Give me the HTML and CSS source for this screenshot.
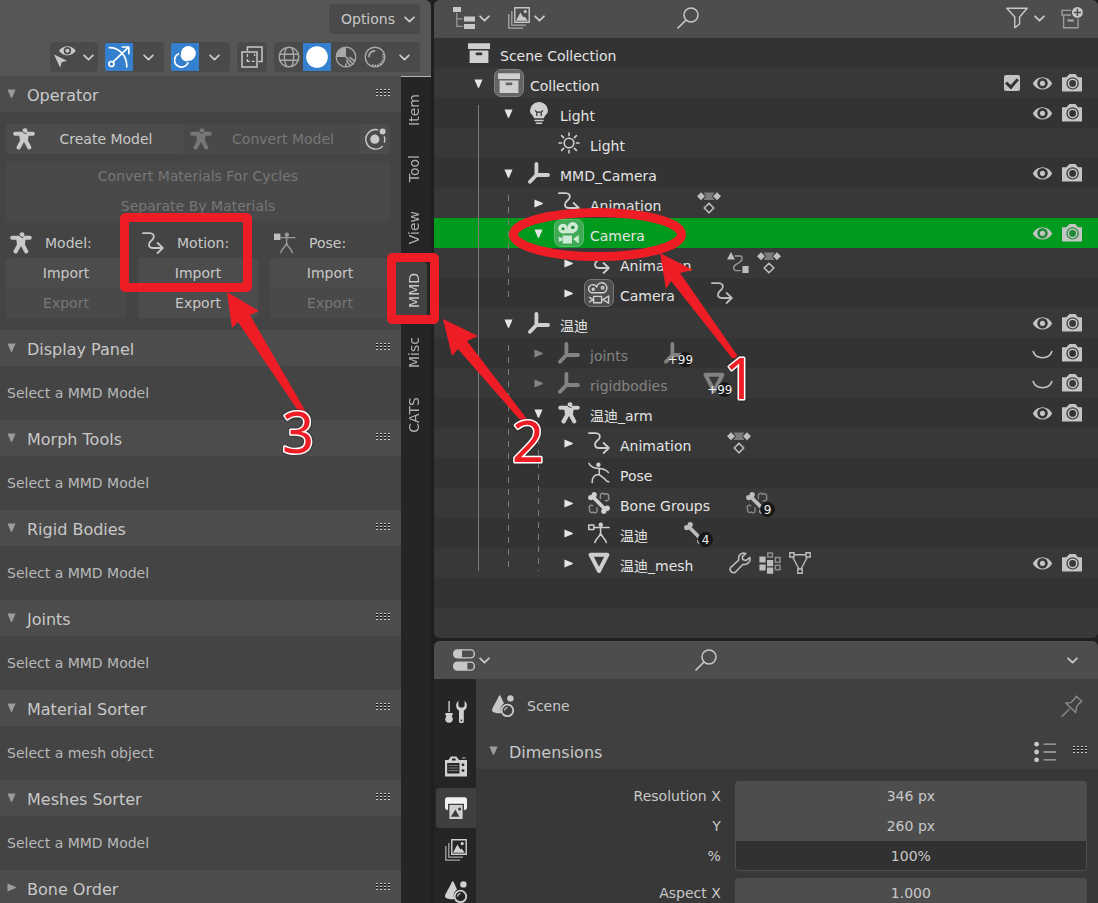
FILE: index.html
```html
<!DOCTYPE html>
<html lang="en">
<head>
<meta charset="utf-8">
<title>Scene editor</title>
<link rel="stylesheet" href="styles.css">
</head>
<body>
<svg class="defs" aria-hidden="true">
  <symbol id="chev" viewBox="0 0 10 10"><path d="M1 3l4 4 4-4" class="s" stroke-width="1.6"/></symbol>
  <symbol id="down" viewBox="0 0 10 10"><path d="M.5 .5h9L5.6 9.6H4.4z"/></symbol>
  <symbol id="right" viewBox="0 0 10 10"><path d="M.5 .5v9L9.8 5.5v-1z"/></symbol>
  <symbol id="grip" viewBox="0 0 15 8"><path d="M0 0h2v1H0zM4 0h2v1H4zM8 0h2v1H8zM12 0h2v1h-2zM0 3h2v1H0zM4 3h2v1H4zM8 3h2v1H8zM12 3h2v1h-2zM0 6h2v1H0zM4 6h2v1H4zM8 6h2v1H8zM12 6h2v1h-2z"/><path fill="#0c0c0c" d="M0 1h2v1H0zM4 1h2v1H4zM8 1h2v1H8zM12 1h2v1h-2zM0 4h2v1H0zM4 4h2v1H4zM8 4h2v1H8zM12 4h2v1h-2z"/></symbol>
  <symbol id="man" viewBox="0 0 22 22"><path class="s" stroke-width="4" d="M2.2 5.8H19.8"/><path d="M6 5h10L14.8 13H7z"/><path class="s" stroke-width="4.2" d="M9.4 12.5L5.6 19.4M12.6 12.5l3.6 6.9"/><circle cx="12" cy="2.6" r="2.4"/><path d="M9.4 3.4Q10.6 5.6 13.4 5.4" fill="none" stroke="#444" stroke-width="1"/></symbol>
  <symbol id="anim" viewBox="0 0 22 22"><path class="s" stroke-width="1.8" d="M1 1.2H7.4C11 1.2 12.6 3 11.4 6.2C10.6 8.4 7 9.2 7 12.4C7 14.8 9 16 11.6 16H20.6M15.6 11l5.2 5-5.2 5"/></symbol>
  <symbol id="posefig" viewBox="0 0 22 22"><circle cx="12.8" cy="2.8" r="2.2"/><path class="s" stroke-width="1.4" d="M7 5.6H21M12.6 5.6V11M12.6 11C11.6 15.4 8.4 15.4 6.8 20.6M12.6 11C13.6 15.4 16.8 15.4 18.4 20.6"/><path fill="#c0c0c0" d="M0 1.6h6.4V8H0z"/></symbol>
  <symbol id="armdata" viewBox="0 0 22 22"><circle cx="12.8" cy="2.8" r="2.2"/><path class="s" stroke-width="1.5" d="M6.2 5.6H21M12.6 5.6V11M12.6 11C11.6 15.4 8.4 15.4 6.8 20.6M12.6 11C13.6 15.4 16.8 15.4 18.4 20.6M.8 3h5v4.6h-5z"/></symbol>
  <symbol id="pose" viewBox="0 0 22 22"><circle cx="10.4" cy="2.8" r="2.2"/><path class="s" stroke-width="1.5" d="M1 1.4C3 5.4 7 6.4 10.6 6.4C15 6.4 17.6 7 20.4 10.4M11.2 6.6V12.6L17 17.2C18.2 19.4 19 19.8 21 19.8M11.2 12.6C6 12.6 4 15.4 4.2 20.6"/></symbol>
  <symbol id="orbit" viewBox="0 0 22 22"><circle cx="10.8" cy="11.2" r="4.6"/><circle cx="18.6" cy="3.4" r="3"/><path class="s" stroke-width="1.4" d="M13.6 1.7A9.8 9.8 0 1 0 18.4 18.4M20.4 9A9.8 9.8 0 0 1 20.4 14"/></symbol>
  <symbol id="eyecursor" viewBox="0 0 22 22"><path d="M5 4.8C9-1.2 17.8-1.2 21.8 4.8C17.8 11 9 11 5 4.8z"/><circle cx="13.4" cy="4.8" r="3.7" class="k"/><circle cx="13.4" cy="4.8" r="2"/><path d="M0 8.6L13 14.8 7.6 16.2 6.2 21.8z"/></symbol>
  <symbol id="gizmo" viewBox="0 0 22 22"><path class="s" stroke-width="1.7" d="M1.4 1.6C11.6 1.6 18.8 9.6 18.8 20.8M5.4 15.6L20.6 1.2M14.4 1H20.8V7.6"/><circle class="s" stroke-width="1.7" cx="3.4" cy="18" r="2.5"/></symbol>
  <symbol id="overlay" viewBox="0 0 22 22"><circle cx="14.4" cy="7.4" r="7.4"/><path class="s" stroke="#3480ce" stroke-width="1.6" d="M8 7A7 7 0 0 1 14.8 14"/><path class="s" stroke-width="1.7" d="M4.6 7.8A7 7 0 1 0 14 16.8"/><path class="s" stroke="#3480ce" stroke-width="1.5" d="M7.2 9.6A7.6 7.6 0 0 0 12.4 14.8"/></symbol>
  <symbol id="xray" viewBox="0 0 22 22"><path class="s sq" stroke-width="1.5" d="M6.4 5V1H21V15.6H17.4M1 6H16V21H1z"/><path class="s sq" stroke-width="1.3" d="M6.4 8v3M6.4 13v2.4H9M11 15.4h2.6M13.6 10V8"/></symbol>
  <symbol id="wire" viewBox="0 0 22 22"><g class="s" stroke-width="1.4"><circle cx="11" cy="11" r="9.8"/><path d="M1.4 8.2H20.6M1.4 14.2H20.6M8.6 1.4C5.6 7 5.6 15 8.6 20.6M13.6 1.4C16.4 7 16.4 15 13.6 20.6"/></g></symbol>
  <symbol id="solid" viewBox="0 0 22 22"><circle cx="11" cy="11" r="10.8"/></symbol>
  <symbol id="matprev" viewBox="0 0 22 22"><circle class="s" stroke-width="1.3" cx="11" cy="11" r="9.8"/><path d="M11 11V1.2A9.8 9.8 0 0 0 1.2 11z"/><path class="s" stroke-width="1.6" d="M11 11L18 18M11.6 14.8L15 19.6M11 18v2.6M15 11.6L19.6 15"/></symbol>
  <symbol id="rendered" viewBox="0 0 22 22"><circle class="s" stroke-width="1.4" cx="11" cy="11" r="9.8"/><path class="s" stroke-width="1.8" d="M5 10.4C5 7.4 7.4 5 10.4 5"/><path fill="none" stroke="currentColor" stroke-width="2.4" stroke-dasharray="1.4 1.2" d="M19 8A8.4 8.4 0 0 1 8 19"/></symbol>
  <symbol id="outliner" viewBox="0 0 22 22"><path d="M0 0h8v5H0zM11 9.4h11v5H11zM11 17h11v5H11z"/><path class="s" stroke-width="1.3" opacity=".6" d="M3.8 6.4V19.4H9.6M3.8 11.8H9.6"/></symbol>
  <symbol id="layers" viewBox="0 0 22 22"><path class="s sq" stroke-width="1.4" d="M6.8 .8H21.2V15.2H6.8z"/><path class="s sq" stroke-width="1.3" opacity=".75" d="M3.8 4V18.2H18M.8 7V21.2H15"/><path d="M8 13.8L12.4 5.4 15.4 10.4 16.6 9.4 19.8 13.8z"/><circle cx="17.2" cy="4.6" r="1.6"/></symbol>
  <symbol id="search" viewBox="0 0 22 22"><circle class="s" stroke-width="1.5" cx="14" cy="8" r="7"/><path class="s" stroke-width="1.7" d="M9 13L1 21"/></symbol>
  <symbol id="filter" viewBox="0 0 22 22"><path class="s" stroke-width="1.4" d="M.8 1.2H21.2L13.6 10V17L8.8 20.8V10z"/></symbol>
  <symbol id="newcol" viewBox="0 0 22 22"><path class="s sq" stroke-width="1.4" opacity=".65" d="M10 3.4H1V8H10M2.6 9V20.8H17V11.6"/><path d="M6.4 12.2h6.4v2.6H6.4z" opacity=".65"/><circle cx="16.4" cy="5.4" r="5.4"/><path stroke="#4d4d4d" stroke-width="1.5" d="M12.8 5.4h7.2M16.4 1.8v7.2"/></symbol>
  <symbol id="box" viewBox="0 0 22 22"><path d="M0 1.2h22V7H0zM1.6 8.4H20.4V21H1.6z"/><rect class="k" x="7.6" y="10.4" width="6.8" height="2.8" rx="1.2"/></symbol>
  <symbol id="bulb" viewBox="0 0 22 22"><path d="M11 0A8.8 8.8 0 0 1 20 8.6C20 12.6 16.6 13 16 16.2H6C5.4 13 2 12.6 2 8.6A8.8 8.8 0 0 1 11 0z"/><path stroke="#333" fill="none" stroke-width="1.2" d="M7 8.4L8.8 10.2H13.2L15 8.4M8.8 10.2V14M13.2 10.2V14"/><path class="s" stroke-width="1.5" d="M7 18.4H15M8.4 21.2H13.6"/></symbol>
  <symbol id="sun" viewBox="0 0 22 22"><circle class="s" stroke-width="1.6" cx="11" cy="11" r="4.8"/><path class="s" stroke-width="1.6" d="M11 1V3.6M11 18.4V21M1 11H3.6M18.4 11H21M3.6 3.6L5.6 5.6M16.4 16.4L18.4 18.4M18.4 3.6L16.4 5.6M3.6 18.4L5.6 16.4"/></symbol>
  <symbol id="empty" viewBox="0 0 22 22"><path class="s" stroke-width="3.8" d="M8.4 2V13H20M8.4 13L2 19.8"/></symbol>
  <symbol id="cam" viewBox="0 0 22 22"><circle cx="5" cy="6.6" r="4.8"/><circle cx="14.8" cy="5.2" r="5.2"/><path d="M4 7H16V11.2H4zM4.6 13.4H14V21.4H4.6zM15 17L20.8 13V21.6zM.8 14.6l3.4 1.6v2.4L.8 20z"/><circle class="k" cx="5" cy="6.8" r="1.5"/><circle class="k" cx="14.8" cy="5.4" r="1.7"/></symbol>
  <symbol id="camdata" viewBox="0 0 22 22"><g class="s" stroke-width="1.4"><path d="M3.4 10.8A4.2 4.2 0 1 1 8.6 5A5.2 5.2 0 1 1 15.6 10.8zM5.6 14.4H13.6V20.8H5.6zM15 17.6L20.6 14V21.2zM1.4 15.4L5 17.6 1.4 19.8"/><circle cx="5.2" cy="7.2" r="1"/><circle cx="14.6" cy="5.8" r="1.3"/></g></symbol>
  <symbol id="action" viewBox="0 0 24 22"><path d="M0 4.2L4 .2 8 4.2 4 8.2zM16 4.2L20 .2 24 4.2 20 8.2z"/><path opacity=".5" d="M6.6 .4H17.4L15 4.2 17.4 8H6.6L9 4.2z"/><path class="s" stroke-width="1.6" d="M12 11.2L16.8 16 12 20.8 7.2 16z"/></symbol>
  <symbol id="driver" viewBox="0 0 22 22"><path d="M4 0L8 7.6H0zM15.4 14h6.2v7h-6.2z"/><path class="s" stroke-width="1.4" opacity=".75" d="M8 4H13C16 4 15.6 8 13 10C9 13 6.4 13 6.6 16C6.8 19 9 18.6 13 18.6"/></symbol>
  <symbol id="tri" viewBox="0 0 22 22"><path fill="none" stroke="currentColor" stroke-linejoin="round" stroke-width="4" d="M2.6 2.8H19.4L11 19z"/></symbol>
  <symbol id="tridata" viewBox="0 0 22 22"><path class="s sq" stroke-width="1.4" d="M5 2.8H17M3.6 5L10 17M18.4 5L12 17M.8 .8H5V5H.8zM17 .8h4.2V5H17zM8.8 17H13.2V21.2H8.8z"/></symbol>
  <symbol id="bone" viewBox="0 0 22 22"><path class="s" stroke-width="3.8" d="M5 5L17 17"/><circle cx="2.8" cy="5.6" r="2.7"/><circle cx="6.2" cy="2.7" r="2.6"/><circle cx="19.2" cy="16.2" r="2.7"/><circle cx="15.8" cy="19.2" r="2.6"/></symbol>
  <symbol id="bonegrp" viewBox="0 0 22 22"><use href="#bone"/><path class="s" stroke-width="1.4" opacity=".6" d="M12.4 6.4V3.6C12.4 1.4 15 .4 16.4 2.4C18.8 .6 21.4 2.6 20.4 5.2C21.8 7.4 19.4 9.4 17.4 8.6M9 15.8V18.8C9 21 6.6 21.4 5.4 20C3.2 21.6 .8 19.8 1.8 17C0 14.8 2.4 12.6 4.6 13.6"/></symbol>
  <symbol id="wrench" viewBox="0 0 22 22"><path class="s" stroke-width="1.6" d="M16.8 1.6C12.6-.2 8.6 3.4 9.8 8L1.8 15.4C-.4 18 3.4 22.4 6.6 20L14 12.2C18.4 13.4 22 9.4 20.8 5.4L17 8.6 13.6 7.6 13.4 4.6z"/></symbol>
  <symbol id="vgroup" viewBox="0 0 22 22"><path d="M.4 4.4h6.2v6.2H.4zM.4 12.4h6.2v6.2H.4zM8 8h6.2v6.2H8zM8 15.6h6.2v6.2H8z"/><path class="s sq" stroke-width="1.5" opacity=".65" d="M8.8 1h4.6V5H8.8zM16.4 5.6H21v4.6h-4.6zM16.4 13.2H21v4.6h-4.6z"/></symbol>
  <symbol id="eye" viewBox="0 0 22 22"><path d="M.8 11C5.4 2.2 16.6 2.2 21.2 11C16.6 19.4 5.4 19.4 .8 11z"/><circle class="k" cx="11" cy="10.8" r="5.5"/><circle cx="11" cy="10.8" r="2.7"/></symbol>
  <symbol id="closed" viewBox="0 0 22 22"><path class="s" stroke-width="1.7" d="M1.2 9C4.2 17.6 17.8 17.6 20.8 9"/></symbol>
  <symbol id="photo" viewBox="0 0 22 22"><path d="M1 5.2H5.4L8.4 2H14.4L17 5.2H21V19.4H1z"/><circle class="k" cx="11.6" cy="11.4" r="6.2"/><circle class="s" stroke-width="1.6" cx="11.6" cy="11.4" r="4.2"/></symbol>
  <symbol id="props" viewBox="0 0 22 22"><rect class="s" x=".7" y=".9" width="20.6" height="8" rx="3.6" stroke-width="1.4"/><rect class="s" x=".7" y="13.1" width="20.6" height="8" rx="3.6" stroke-width="1.4"/><path d="M3.6 1H9V9H3.6C-.2 8 .2 1.4 3.6 1zM3.6 13.2H14.4V21H3.6C-.2 20 .2 14 3.6 13.2z"/></symbol>
  <symbol id="tools" viewBox="0 0 22 22"><path d="M3.4 0h1.4v11H3.4zM.4 12H7.6V14L6.6 15C9 18 7.8 21.8 4 21.8S-.8 18 1.4 15L.4 14z"/><path d="M13.4 0V5L15 6.4H18L19.6 5V0C22.8 2 22.8 7.4 18.8 9.6V20A2.4 2.4 0 0 1 14 20V9.6C10.4 7.6 10.2 2 13.4 0z"/><circle cx="16.4" cy="19.4" r=".9" fill="#252525"/></symbol>
  <symbol id="render" viewBox="0 0 22 22"><path d="M0 5H3.4L6 1.4H11.4L14 5H22V21.6H0z"/><path d="M17 2.2h3.6v1.4H17z" opacity=".7"/><path fill="#252525" d="M2.2 8H14.4V18.6H2.2zM7 3.6h3.6V5.4H7z"/><path stroke="currentColor" opacity=".5" d="M3.4 10.4H13.2M3.4 13H13.2M3.4 15.6H13.2"/><circle cx="18" cy="9.8" r="1.4" fill="#252525"/><circle cx="18" cy="15.6" r="1.4" fill="#252525"/></symbol>
  <symbol id="output" viewBox="0 0 22 22"><path fill="#f2f2f2" d="M2.4 .2H19.6Q22 .2 22 3V10.6Q22 13 19 13V6.8H3V13Q0 13 0 10.6V3Q0 .2 2.4 .2z"/><path d="M4.4 8H17.6V22H4.4z"/><path fill="#3c3c3c" d="M5.8 19.8L10.4 12.6 14.4 19.8z"/><circle cx="14.6" cy="12" r="1.5" fill="#3c3c3c"/></symbol>
  <symbol id="scene" viewBox="0 0 22 22"><path d="M7 .4H8.4L12 8.6C8.6 11 8 14.6 9.4 18C5 18.8 0 17.8 0 15.2C0 12.6 3.6 8.6 7 .4z"/><circle cx="18.4" cy="3.4" r="3.2"/><circle class="s" stroke-width="1.8" cx="15.4" cy="15.4" r="5.8"/><path class="s" stroke-width="1.3" d="M12.6 15A3 3 0 0 1 15 12.6"/></symbol>
  <symbol id="pin" viewBox="0 0 22 22"><path class="s" stroke-width="1.4" d="M15.4 1.2L20.8 6.4 18 8.6 15.6 11.6 14.6 17.6 4.8 8 10 7.6 13.6 3.8zM8 14.4L1 21.2"/></symbol>
  <symbol id="list" viewBox="0 0 22 22"><circle cx="2.6" cy="3.2" r="2.4"/><circle cx="2.6" cy="11" r="2.4"/><circle cx="2.6" cy="18.8" r="2.4"/><path class="s" stroke-width="1.3" opacity=".8" d="M10 3.2H21.4M10 11H21.4M10 18.8H21.4"/></symbol>
</svg>

<div class="app">
  <section class="viewport" aria-label="3D viewport">
    <header class="vp-head">
      <div class="vp-line"><button class="options">Options <svg class="c"><use href="#chev"/></svg></button></div>
      <div class="vp-line">
        <div class="group"><button class="tight" aria-label="Visibility"><svg class="i"><use href="#eyecursor"/></svg><svg class="c"><use href="#chev"/></svg></button></div>
        <div class="group"><button class="on" aria-label="Gizmos"><svg class="i"><use href="#gizmo"/></svg></button><button class="slot" aria-label="Gizmo options"><svg class="c"><use href="#chev"/></svg></button></div>
        <div class="group"><button class="on" aria-label="Overlays"><svg class="i"><use href="#overlay"/></svg></button><button class="slot" aria-label="Overlay options"><svg class="c"><use href="#chev"/></svg></button></div>
        <div class="group"><button class="slot" aria-label="X-ray"><svg class="i"><use href="#xray"/></svg></button></div>
        <div class="group soft"><button class="slot" aria-label="Wireframe"><svg class="i"><use href="#wire"/></svg></button><button class="on" aria-label="Solid"><svg class="i"><use href="#solid"/></svg></button><button class="slot" aria-label="Material preview"><svg class="i"><use href="#matprev"/></svg></button><button class="slot" aria-label="Rendered"><svg class="i"><use href="#rendered"/></svg></button><button class="slot bright" aria-label="Shading options"><svg class="c"><use href="#chev"/></svg></button></div>
      </div>
    </header>
    <div class="side">
      <div class="panels">
        <section>
          <h2><svg class="t"><use href="#down"/></svg>Operator<svg class="g"><use href="#grip"/></svg></h2>
          <div class="body operator">
            <div class="joined">
              <button class="wide"><svg class="i"><use href="#man"/></svg><span>Create Model</span></button>
              <button class="wide" disabled><svg class="i"><use href="#man"/></svg><span>Convert Model</span></button>
              <button class="slot" aria-label="Rigid body world"><svg class="i"><use href="#orbit"/></svg></button>
            </div>
            <div class="stack">
              <button disabled>Convert Materials For Cycles</button>
              <button disabled>Separate By Materials</button>
            </div>
            <div class="cols">
              <div><h3><svg class="i"><use href="#man"/></svg>Model:</h3><div class="stack"><button>Import</button><button disabled>Export</button></div></div>
              <div><h3><svg class="i"><use href="#anim"/></svg>Motion:</h3><div class="stack"><button>Import</button><button>Export</button></div></div>
              <div><h3><svg class="i dim"><use href="#posefig"/></svg>Pose:</h3><div class="stack"><button>Import</button><button disabled>Export</button></div></div>
            </div>
          </div>
        </section>
        <section><h2><svg class="t"><use href="#down"/></svg>Display Panel<svg class="g"><use href="#grip"/></svg></h2><div class="body"><p>Select a MMD Model</p></div></section>
        <section><h2><svg class="t"><use href="#down"/></svg>Morph Tools<svg class="g"><use href="#grip"/></svg></h2><div class="body"><p>Select a MMD Model</p></div></section>
        <section><h2><svg class="t"><use href="#down"/></svg>Rigid Bodies<svg class="g"><use href="#grip"/></svg></h2><div class="body"><p>Select a MMD Model</p></div></section>
        <section><h2><svg class="t"><use href="#down"/></svg>Joints<svg class="g"><use href="#grip"/></svg></h2><div class="body"><p>Select a MMD Model</p></div></section>
        <section><h2><svg class="t"><use href="#down"/></svg>Material Sorter<svg class="g"><use href="#grip"/></svg></h2><div class="body"><p>Select a mesh object</p></div></section>
        <section><h2><svg class="t"><use href="#down"/></svg>Meshes Sorter<svg class="g"><use href="#grip"/></svg></h2><div class="body"><p>Select a MMD Model</p></div></section>
        <section><h2><svg class="t"><use href="#right"/></svg>Bone Order<svg class="g"><use href="#grip"/></svg></h2></section>
      </div>
      <nav class="vtabs" aria-label="Sidebar tabs">
        <button>Item</button><button>Tool</button><button>View</button><button class="active">MMD</button><button>Misc</button><button>CATS</button>
      </nav>
    </div>
  </section>

  <div class="right">
    <section class="outliner" aria-label="Outliner">
      <header class="bar">
        <div class="left">
          <button aria-label="Editor type"><svg class="i"><use href="#outliner"/></svg><svg class="c"><use href="#chev"/></svg></button>
          <button aria-label="Display mode"><svg class="i"><use href="#layers"/></svg><svg class="c"><use href="#chev"/></svg></button>
        </div>
        <label class="find"><svg class="i"><use href="#search"/></svg><input type="text" aria-label="Search outliner"></label>
        <div class="tail">
          <button aria-label="Filter"><svg class="i"><use href="#filter"/></svg><svg class="c"><use href="#chev"/></svg></button>
          <button aria-label="New collection"><svg class="i"><use href="#newcol"/></svg></button>
        </div>
      </header>
      <ul class="tree">
        <li class="l0"><span class="ico"><svg class="i"><use href="#box"/></svg></span><span class="name">Scene Collection</span></li>
        <li class="l0"><span class="arr"><svg class="t"><use href="#down"/></svg></span><span class="ico tile strong"><svg class="i"><use href="#box"/></svg></span><span class="name">Collection</span>
          <span class="tog"><label class="check"><input type="checkbox" checked aria-label="Include collection"></label><button aria-label="Hide"><svg class="e"><use href="#eye"/></svg></button><button aria-label="Disable in render"><svg class="i"><use href="#photo"/></svg></button></span></li>
        <li class="l1"><span class="arr"><svg class="t"><use href="#down"/></svg></span><span class="ico"><svg class="i"><use href="#bulb"/></svg></span><span class="name">Light</span>
          <span class="tog"><button aria-label="Hide"><svg class="e"><use href="#eye"/></svg></button><button aria-label="Disable in render"><svg class="i"><use href="#photo"/></svg></button></span></li>
        <li class="l2"><span class="arr"></span><span class="ico"><svg class="i"><use href="#sun"/></svg></span><span class="name">Light</span></li>
        <li class="l1"><span class="arr"><svg class="t"><use href="#down"/></svg></span><span class="ico"><svg class="i"><use href="#empty"/></svg></span><span class="name">MMD_Camera</span>
          <span class="tog"><button aria-label="Hide"><svg class="e"><use href="#eye"/></svg></button><button aria-label="Disable in render"><svg class="i"><use href="#photo"/></svg></button></span></li>
        <li class="l2"><span class="arr"><svg class="t"><use href="#right"/></svg></span><span class="ico"><svg class="i"><use href="#anim"/></svg></span><span class="name">Animation</span><span class="ext"><svg class="w"><use href="#action"/></svg></span></li>
        <li class="l2 sel"><span class="arr"><svg class="t"><use href="#down"/></svg></span><span class="ico tile"><svg class="i"><use href="#cam"/></svg></span><span class="name">Camera</span>
          <span class="tog"><button aria-label="Hide"><svg class="e"><use href="#eye"/></svg></button><button aria-label="Disable in render"><svg class="i"><use href="#photo"/></svg></button></span></li>
        <li class="l3"><span class="arr"><svg class="t"><use href="#right"/></svg></span><span class="ico"><svg class="i"><use href="#anim"/></svg></span><span class="name">Animation</span><span class="ext"><svg class="i"><use href="#driver"/></svg><svg class="w"><use href="#action"/></svg></span></li>
        <li class="l3"><span class="arr"><svg class="t"><use href="#right"/></svg></span><span class="ico tile"><svg class="i"><use href="#camdata"/></svg></span><span class="name">Camera</span><span class="ext"><svg class="i"><use href="#anim"/></svg></span></li>
        <li class="l1"><span class="arr"><svg class="t"><use href="#down"/></svg></span><span class="ico"><svg class="i"><use href="#empty"/></svg></span><span class="name">温迪</span>
          <span class="tog"><button aria-label="Hide"><svg class="e"><use href="#eye"/></svg></button><button aria-label="Disable in render"><svg class="i"><use href="#photo"/></svg></button></span></li>
        <li class="l2 off"><span class="arr"><svg class="t"><use href="#right"/></svg></span><span class="ico"><svg class="i"><use href="#empty"/></svg></span><span class="name">joints</span><span class="ext"><svg class="i"><use href="#empty"/></svg><span class="badge">+99</span></span>
          <span class="tog"><button aria-label="Show"><svg class="e"><use href="#closed"/></svg></button><button aria-label="Disable in render"><svg class="i"><use href="#photo"/></svg></button></span></li>
        <li class="l2 off"><span class="arr"><svg class="t"><use href="#right"/></svg></span><span class="ico"><svg class="i"><use href="#empty"/></svg></span><span class="name">rigidbodies</span><span class="ext"><svg class="i"><use href="#tri"/></svg><span class="badge">+99</span></span>
          <span class="tog"><button aria-label="Show"><svg class="e"><use href="#closed"/></svg></button><button aria-label="Disable in render"><svg class="i"><use href="#photo"/></svg></button></span></li>
        <li class="l2"><span class="arr"><svg class="t"><use href="#down"/></svg></span><span class="ico"><svg class="i"><use href="#man"/></svg></span><span class="name">温迪_arm</span>
          <span class="tog"><button aria-label="Hide"><svg class="e"><use href="#eye"/></svg></button><button aria-label="Disable in render"><svg class="i"><use href="#photo"/></svg></button></span></li>
        <li class="l3"><span class="arr"><svg class="t"><use href="#right"/></svg></span><span class="ico"><svg class="i"><use href="#anim"/></svg></span><span class="name">Animation</span><span class="ext"><svg class="w"><use href="#action"/></svg></span></li>
        <li class="l3"><span class="arr"></span><span class="ico"><svg class="i"><use href="#pose"/></svg></span><span class="name">Pose</span></li>
        <li class="l3"><span class="arr"><svg class="t"><use href="#right"/></svg></span><span class="ico"><svg class="i"><use href="#bonegrp"/></svg></span><span class="name">Bone Groups</span><span class="ext"><svg class="i"><use href="#bonegrp"/></svg><span class="badge">9</span></span></li>
        <li class="l3"><span class="arr"><svg class="t"><use href="#right"/></svg></span><span class="ico"><svg class="i"><use href="#armdata"/></svg></span><span class="name">温迪</span><span class="ext"><svg class="i"><use href="#bone"/></svg><span class="badge">4</span></span></li>
        <li class="l3"><span class="arr"><svg class="t"><use href="#right"/></svg></span><span class="ico"><svg class="i"><use href="#tri"/></svg></span><span class="name">温迪_mesh</span><span class="ext"><svg class="i"><use href="#wrench"/></svg><svg class="i"><use href="#vgroup"/></svg><svg class="i"><use href="#tridata"/></svg></span>
          <span class="tog"><button aria-label="Hide"><svg class="e"><use href="#eye"/></svg></button><button aria-label="Disable in render"><svg class="i"><use href="#photo"/></svg></button></span></li>
        <li></li><li></li>
      </ul>
      <svg class="guides" aria-hidden="true"><path d="M44.5 105V571"/><path stroke-dasharray="6 6" d="M74.5 195V300M74.5 345V570M104.5 438V571"/></svg>
    </section>

    <section class="properties" aria-label="Properties">
      <header class="bar narrow">
        <div class="left"><button aria-label="Editor type"><svg class="i"><use href="#props"/></svg><svg class="c"><use href="#chev"/></svg></button></div>
        <label class="find"><svg class="i"><use href="#search"/></svg><input type="text" aria-label="Search properties"></label>
        <div class="tail"><button class="slot" aria-label="Options"><svg class="c"><use href="#chev"/></svg></button></div>
      </header>
      <div class="prop-main">
        <nav class="ptabs" aria-label="Property tabs">
          <button class="first" aria-label="Tool"><svg class="i"><use href="#tools"/></svg></button>
          <button aria-label="Render"><svg class="i"><use href="#render"/></svg></button>
          <button class="active" aria-label="Output"><svg class="i"><use href="#output"/></svg></button>
          <button aria-label="View layer"><svg class="i"><use href="#layers"/></svg></button>
          <button aria-label="Scene"><svg class="i"><use href="#scene"/></svg></button>
        </nav>
        <div class="prop-body">
          <div class="crumb"><svg class="i"><use href="#scene"/></svg><span>Scene</span><button aria-label="Pin"><svg class="i"><use href="#pin"/></svg></button></div>
          <h2><svg class="t"><use href="#down"/></svg>Dimensions<button aria-label="Presets"><svg class="i"><use href="#list"/></svg></button><svg class="g"><use href="#grip"/></svg></h2>
          <form class="fields">
            <div class="set">
              <label for="rx">Resolution X</label><input id="rx" type="text" value="346 px">
              <label for="ry">Y</label><input id="ry" type="text" value="260 px">
              <label for="rp">%</label><input id="rp" class="well" type="text" value="100%">
            </div>
            <div class="set"><label for="ax">Aspect X</label><input id="ax" type="text" value="1.000"></div>
          </form>
        </div>
      </div>
    </section>
  </div>

  <svg class="notes" aria-hidden="true">
    <g class="frame">
      <rect x="124.5" y="217.5" width="123" height="70" rx="1"/>
      <rect x="391.5" y="257.5" width="43" height="62" rx="1"/>
      <ellipse cx="597.5" cy="234.5" rx="84" ry="22"/>
    </g>
    <g class="pointer">
      <path d="M660 253L693 270 680 273 737 355Q737 359 732 358L671 281 666 289z"/>
      <path d="M443 319L478 336 467 341 527 419 521 421 458 349 452 356z"/>
      <path d="M227 292L259 311 250 315 306 412 299 412 238 322 232 328z"/>
    </g>
    <g class="num"><text x="724" y="399">1</text><text x="512" y="462">2</text><text x="282" y="453">3</text></g>
  </svg>
</div>
</body>
</html>
```
FILE: styles.css
```css
* { box-sizing: border-box; }
body, h2, h3, p, ul { margin: 0; padding: 0; font-weight: normal; }
body {
  background: #1f1f1f;
  color: #c8c8c8;
  font: 14px/20px "DejaVu Sans", "Noto Sans CJK SC", sans-serif;
  overflow: hidden;
}
button, input { font: inherit; color: inherit; background: none; border: 0; padding: 0; margin: 0; }
button { display: flex; align-items: center; justify-content: center; }
svg { flex: none; fill: currentColor; }
.defs { position: absolute; width: 0; height: 0; }
.s { fill: none; stroke: currentColor; stroke-linecap: round; stroke-linejoin: round; }
.sq { stroke-linecap: butt; stroke-linejoin: miter; }
.k { fill: var(--cut, #353535); }
.i { width: 22px; height: 22px; }
.w { width: 24px; height: 22px; }
.e { width: 21px; height: 21px; }
.c { width: 11px; height: 11px; }
.t { width: 9px; height: 9px; }
.g { width: 15px; height: 8px; }

.app { position: relative; display: grid; grid-template-columns: 431px 1fr; gap: 3px; height: 100vh; overflow: hidden; }

/* viewport */
.viewport { display: flex; flex-direction: column; min-height: 0; }
.vp-head { display: flex; flex-direction: column; gap: 8px; padding: 4px 11px 4px; background: #565656; border-radius: 0 6px 0 0; }
.vp-line { display: flex; justify-content: flex-end; gap: 7px; }
.options { height: 30px; padding: 0 5px 0 12px; gap: 9px; background: #4a4a4a; border-radius: 4px; }
.group { display: flex; align-items: center; height: 30px; background: #4a4a4a; border-radius: 4px; overflow: hidden; --cut: #4a4a4a; }
.group.soft { color: #a8a8a8; }
.group.soft .slot { width: 29px; }
.group .bright { color: #c8c8c8; }
.group.soft .bright { width: 31px; }
.slot { width: 30px; height: 30px; }
.on + .slot { width: 31px; }
.tight { width: 48px; gap: 7px; }
.on { width: 28px; height: 28px; background: #3480ce; color: #fff; }
.side { display: grid; grid-template-columns: 1fr 30px; flex: 1; min-height: 0; }
.panels { overflow: hidden; background: #444; }
h2 { display: flex; align-items: center; gap: 11px; height: 36px; padding: 3px 10px 0 7px; font-size: 16px; background: #4c4c4c; }
h2 .t { color: #9c9c9c; margin-bottom: 4px; }
h2 .g { margin-left: auto; margin-bottom: 5px; }
.body { padding: 12px 11px 12px 6px; color: #b8b8b8; }
.body p { padding: 5px 1px; }
.operator { display: flex; flex-direction: column; gap: 7px; color: #c8c8c8; }
.joined { display: flex; border-radius: 4px; overflow: hidden; }
.joined button { height: 30px; background: #4c4c4c; }
.joined .wide { flex: 1; padding-left: 7px; }
.joined .wide span { flex: 1; padding-right: 6px; }
button:disabled, .joined button:disabled { color: #777; background: #494949; }
.stack { display: grid; border-radius: 4px; overflow: hidden; }
.stack button { height: 30px; background: #4c4c4c; }
.stack button:disabled { background: #494949; }
.cols { display: grid; grid-template-columns: repeat(3, 1fr); gap: 12px; }
h3 { display: flex; align-items: center; gap: 13px; height: 30px; padding-left: 4px; font-size: 14px; }
.dim { color: #999; }
.vtabs { display: flex; flex-direction: column; gap: 7px; padding-top: 6px; background: #252525; border-top: 1px solid #b4b4b4; color: #b0b0b0; }
.vtabs button { writing-mode: vertical-rl; transform: rotate(180deg); width: 26px; padding: 11px 0; }
.vtabs .active { background: #424242; border-radius: 4px 0 0 4px; color: #c8c8c8; }

/* outliner */
.right { display: grid; grid-template-rows: 638px 1fr; gap: 3px; min-width: 0; }
.outliner { position: relative; background: #383838; border-radius: 6px; overflow: hidden; }
.bar { display: grid; grid-template-columns: 224px 1fr auto; align-items: center; height: 38px; padding: 0 11px 2px 19px; background: #4d4d4d; }
.bar.narrow { grid-template-columns: 242px 1fr auto; padding-bottom: 0; }
.bar button { gap: 4px; }
.left, .tail, .find { display: flex; align-items: center; }
.left { gap: 18px; }
.tail { gap: 16px; padding-right: 4px; }
.tail button { gap: 6px; }
.narrow .tail { padding-right: 0; }
.find input { flex: 1; min-width: 0; margin: 0 8px; outline: 0; }
.tree { list-style: none; color: #e4e4e4; }
.tree li { display: flex; align-items: center; height: 30px; padding-right: 11px; background: #383838; --cut: #383838; }
.tree li:nth-child(odd) { background: #333; --cut: #333; }
.tree .sel { background: #009a1e !important; --cut: #1f8a34 !important; }
.tree .off { color: #838383; }
.l0 { padding-left: 30px; }
.l1 { padding-left: 60px; }
.l2 { padding-left: 90px; }
.l3 { padding-left: 120px; }
.arr, .ico { display: flex; align-items: center; justify-content: center; width: 30px; height: 28px; }
.arr { padding-right: 2px; }
.ico { color: #cfcfcf; }
.off .ico { color: #838383; }
.tile { border: 1px solid #777; border-radius: 7px; background: #4d4d4d; }
.strong { background: #656565; border-color: #808080; --cut: #656565; }
.sel .tile { background: #3eab54; border-color: #5cba6e; color: #cfead4; }
.name { padding: 6px 0 0 6px; }
.ext { position: relative; display: flex; gap: 8px; margin-left: 36px; color: #bdbdbd; }
.off .ext { color: #838383; }
.badge { position: absolute; left: 14px; top: 10px; display: flex; justify-content: center; width: 15px; height: 15px; border-radius: 8px; background: #181818; color: #f0f0f0; font-size: 12px; line-height: 16px; }
.off .badge { justify-content: flex-end; }
.tog { display: flex; margin-left: auto; color: #c4c4c4; }
.tog > * { display: flex; align-items: center; justify-content: center; width: 30px; height: 30px; }
.check input { appearance: none; width: 16px; height: 16px; border-radius: 2px; background: #c4c4c4; display: grid; place-items: center; }
.check input::after { content: ""; width: 5px; height: 9px; margin-bottom: 3px; border: solid #333; border-width: 0 3px 3px 0; transform: rotate(42deg); }
.guides { position: absolute; inset: 0; width: 100%; height: 100%; fill: none; stroke: #7c7c7c; pointer-events: none; }

/* properties */
.properties { display: flex; flex-direction: column; min-height: 0; border-radius: 6px 6px 0 0; overflow: hidden; background: #383838; }
.prop-main { display: grid; grid-template-columns: 42px 1fr; flex: 1; min-height: 0; overflow: hidden; }
.ptabs { display: flex; flex-direction: column; gap: 2px; padding: 13px 0 0 2px; background: #252525; color: #d0d0d0; }
.ptabs button { flex: none; height: 40px; border-radius: 4px 0 0 4px; }
.ptabs .first { margin-bottom: 12px; }
.ptabs .active { background: #3f3f3f; }
.crumb { display: flex; align-items: center; gap: 13px; height: 54px; padding: 0 15px 0 16px; background: #404040; }
.crumb button { margin-left: auto; color: #8a8a8a; }
.prop-body h2 { background: #404040; padding-left: 13px; }
.prop-body h2 button { margin-left: auto; margin-bottom: 2px; }
.prop-body h2 .g { margin-left: 6px; }
.fields { display: grid; gap: 7px; padding: 12px 11px 0 0; }
.set { display: grid; grid-template-columns: 41fr 59fr; column-gap: 14px; }
.set label { text-align: right; line-height: 30px; }
.set input { min-width: 0; height: 30px; text-align: center; background: #4d4d4d; }
.set input:first-of-type { border-radius: 4px 4px 0 0; }
.set input:last-of-type { border-radius: 0 0 4px 4px; }
.set input:only-of-type { border-radius: 4px; }
.set .well { background: #313131; border: 1px solid #4d4d4d; border-top: 0; }

/* tutorial marks */
.notes { position: absolute; inset: 0; width: 100%; height: 100%; pointer-events: none; }
.frame { fill: none; stroke: #ee1c25; stroke-width: 9px; stroke-linejoin: round; }
.pointer { fill: #ee1c25; }
.num { font: 56px "Noto Sans", sans-serif; fill: #ee1c25; stroke: #fff; stroke-width: 3px; stroke-linejoin: round; paint-order: stroke; filter: drop-shadow(0 0 1px #222); }
```
